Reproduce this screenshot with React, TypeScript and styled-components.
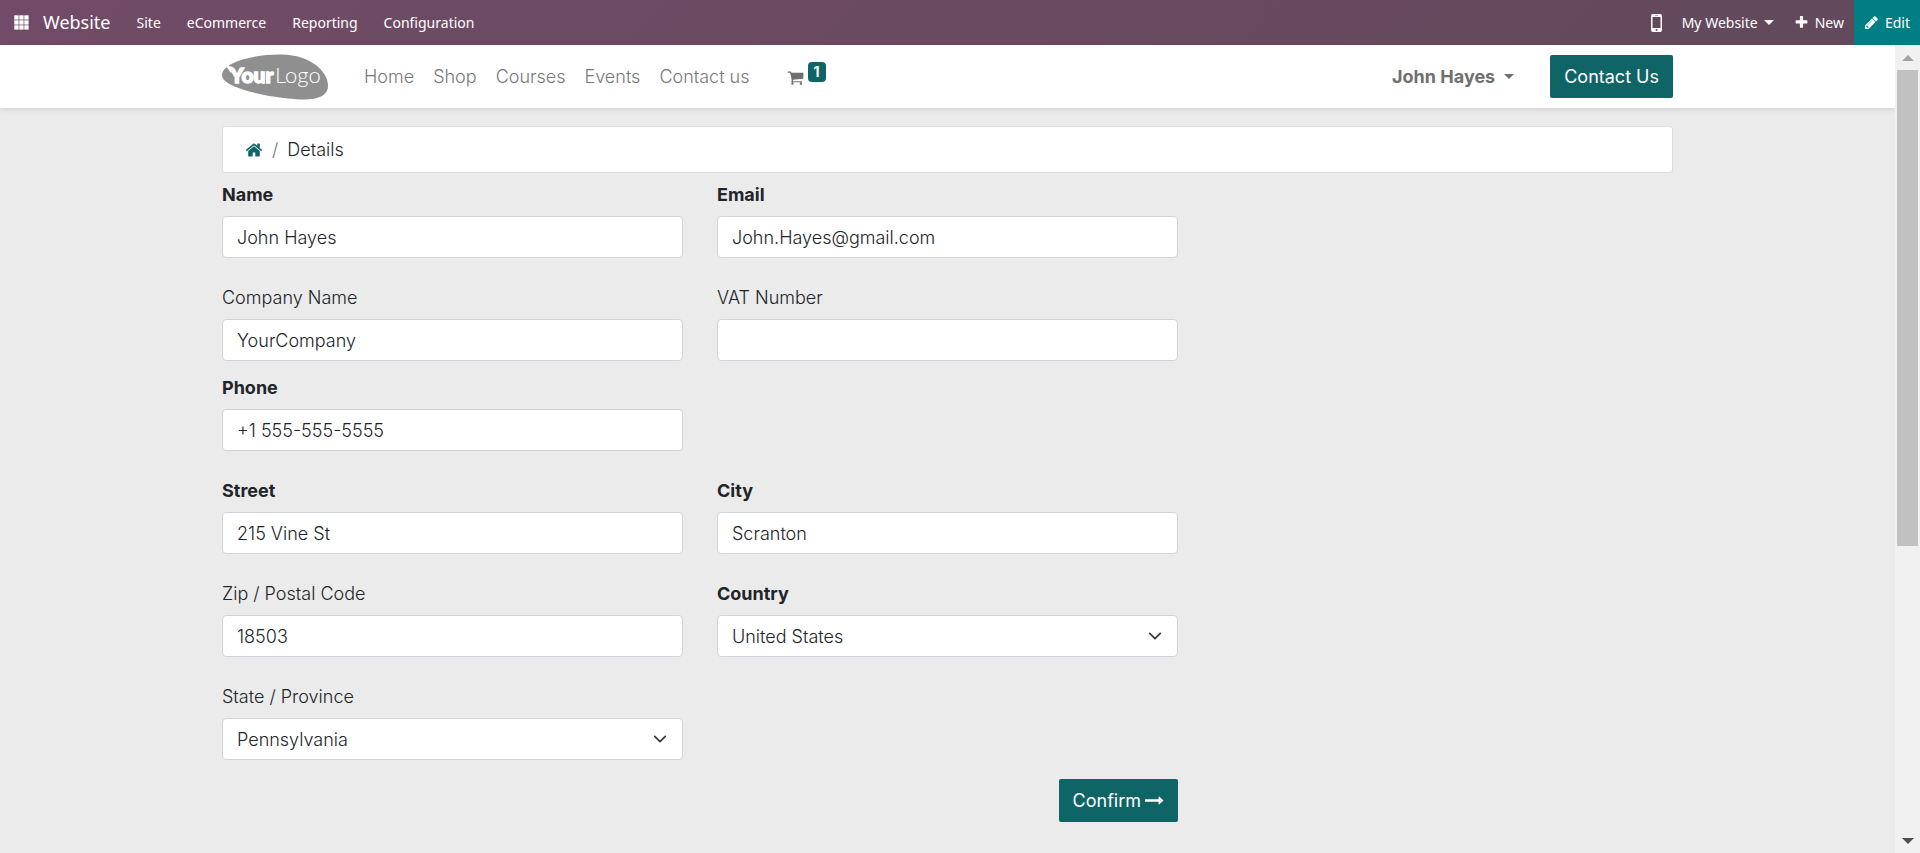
import React from "react";
import styled, { createGlobalStyle } from "styled-components";

const GlobalStyle = createGlobalStyle`
  * { box-sizing: border-box; }
  body {
    margin: 0;
    background: #ebebeb;
    color: #212529;
    font-family: Inter, "Liberation Sans", sans-serif;
    font-size: 18px;
    font-weight: 300;
    line-height: 27px;
  }
  a { color: inherit; text-decoration: none; }
  button, input, select { font: inherit; color: inherit; margin: 0; }
`;

/* ---------- icons ---------- */

const Glyph = styled.svg<{ $size: number }>`
  display: block;
  flex: none;
  width: ${(p) => p.$size}px;
  height: ${(p) => p.$size}px;
  fill: currentColor;
`;

const paths = {
  home: "M1472 992v480q0 26-19 45t-45 19h-384v-384h-256v384h-384q-26 0-45-19t-19-45v-480q0-1 .5-3t.5-3l575-474 575 474q1 2 1 6zm223-69l-62 74q-8 9-21 11h-3q-13 0-21-7l-692-577-692 577q-12 8-24 7-13-2-21-11l-62-74q-8-10-7-23.5t11-21.5l719-599q32-26 76-26t76 26l244 204v-195q0-14 9-23t23-9h192q14 0 23 9t9 23v408l219 182q10 8 11 21.5t-7 23.5z",
  cart: "M704 1536q0 52-38 90t-90 38-90-38-38-90 38-90 90-38 90 38 38 90zm896 0q0 52-38 90t-90 38-90-38-38-90 38-90 90-38 90 38 38 90zm128-1088v512q0 24-16.5 42.5t-40.5 21.5l-1044 122q13 60 13 70 0 16-24 64h920q26 0 45 19t19 45-19 45-45 19h-1024q-26 0-45-19t-19-45q0-11 8-31.5t16-36 21.5-40 15.5-29.5l-177-823h-204q-26 0-45-19t-19-45 19-45 45-19h256q16 0 28.5 6.5t19.5 15.5 13 24.5 8 26 5.5 29.5 4.5 26h1201q26 0 45 19t19 45z",
  pencil: "M491 1536l91-91-235-235-91 91v107h128v128h107zm523-928q0-22-22-22-10 0-17 7l-542 542q-7 7-7 17 0 22 22 22 10 0 17-7l542-542q7-7 7-17zm-54-192l416 416-832 832h-416v-416zm683 96q0 53-37 90l-166 166-416-416 166-165q36-38 90-38 53 0 91 38l235 234q37 39 37 91z",
  plus: "M1600 736v192q0 40-28 68t-68 28h-416v416q0 40-28 68t-68 28h-192q-40 0-68-28t-28-68v-416h-416q-40 0-68-28t-28-68v-192q0-40 28-68t68-28h416v-416q0-40 28-68t68-28h192q40 0 68 28t28 68v416h416q40 0 68 28t28 68z",
  arrow: "M1728 893q0 14-10 24l-384 354q-16 14-35 6-19-9-19-29v-224h-1248q-14 0-23-9t-9-23v-192q0-14 9-23t23-9h1248v-224q0-21 19-29t35 5l384 350q10 10 10 23z",
};

function Icon({ name, size }: { name: keyof typeof paths; size: number }) {
  return (
    <Glyph $size={size} viewBox="0 0 1792 1792" aria-hidden="true">
      <path d={paths[name]} />
    </Glyph>
  );
}

const Caret = styled.span<{ $size: number }>`
  border: ${(p) => p.$size}px solid transparent;
  border-top-color: currentColor;
  border-bottom: 0;
`;

/* ---------- top bar ---------- */

const TopBar = styled.nav`
  display: flex;
  justify-content: space-between;
  height: 45px;
  color: #fff;
  background: linear-gradient(135deg, #714b67, #62495b);
  font: 400 14px/45px "Noto Sans", "Open Sans", sans-serif;
`;

const BarGroup = styled.div`
  display: flex;
  align-items: center;
`;

const AppsButton = styled.button`
  display: flex;
  padding: 0 14px;
  border: 0;
  background: none;
`;

const BrandLink = styled.a`
  margin-right: 13px;
  font-size: 18px;
`;

const BarItem = styled.button<{ $accent?: boolean }>`
  display: flex;
  align-items: center;
  gap: 6px;
  height: 45px;
  padding: 0 ${(p) => (p.$accent ? 10 : 13)}px;
  border: 0;
  background: ${(p) => (p.$accent ? "#017e84" : "none")};
  white-space: nowrap;
`;

const ToolItem = styled(BarItem)`
  padding: 0 10px;
`;

/* ---------- page frame ---------- */

const Viewport = styled.div`
  display: flex;
  min-height: calc(100vh - 45px);
`;

const Page = styled.div`
  flex: 1;
  min-width: 0;
`;

const Container = styled.div`
  width: 100%;
  max-width: 1451px;
  margin: 0 auto;
`;

const ScrollTrack = styled.div`
  display: flex;
  flex: none;
  flex-direction: column;
  align-items: center;
  width: 25px;
  padding: 10px 0 9px;
  background: #f1f1f1;
`;

const ScrollRail = styled.div`
  flex: 1;
  width: 21px;
  margin: 9px 0 12px;
`;

const ScrollThumb = styled.div`
  height: 63%;
  background: #c1c1c1;
`;

const ScrollArrow = styled.span<{ $up?: boolean }>`
  border: 6px solid transparent;
  ${(p) => (p.$up ? "border-bottom-color: #a3a3a3; border-top: 0;" : "border-top-color: #505050; border-bottom: 0;")}
`;

/* ---------- site header ---------- */

const Header = styled.header`
  background: #fff;
  box-shadow: 0 2px 5px rgba(0, 0, 0, 0.1);
`;

const HeaderRow = styled(Container)`
  display: flex;
  align-items: center;
  height: 63px;
`;

const LogoLink = styled.a`
  display: block;
  width: 106px;
  height: 46px;
  margin-right: 27px;
`;

const NavLink = styled.a`
  padding: 0 10px 0 9px;
  color: #787878;
  white-space: nowrap;
`;

const CartLink = styled.a`
  display: flex;
  align-items: flex-start;
  gap: 4px;
  height: 30px;
  margin-left: 27px;
  color: #6f6f6f;
`;

const CartIcon = styled.span`
  padding-top: 7px;
`;

const CartCount = styled.span`
  width: 18px;
  height: 20px;
  border-radius: 4px;
  background: #0f6466;
  color: #fff;
  font-size: 14px;
  font-weight: 700;
  line-height: 19px;
  text-align: center;
`;

const UserMenu = styled.button`
  display: flex;
  align-items: center;
  gap: 9px;
  margin-left: auto;
  margin-right: 36px;
  padding: 0;
  border: 0;
  background: none;
  color: #6f6f6f;
  font-weight: 700;
`;

const PrimaryButton = styled.button`
  display: flex;
  align-items: center;
  gap: 4px;
  height: 43px;
  padding: 0 14px;
  border: 0;
  border-radius: 2px;
  background: #0f6466;
  color: #fff;
  font-weight: 400;
  white-space: nowrap;
`;

/* ---------- content ---------- */

const Breadcrumb = styled.ol`
  display: flex;
  align-items: center;
  gap: 9px;
  height: 47px;
  margin: 18px 0 8px;
  padding: 0 22px;
  border: 1px solid #dcdcdc;
  border-radius: 3px;
  background: #fff;
  list-style: none;
`;

const Separator = styled.li`
  color: #6c757d;
`;

const HomeLink = styled.a`
  color: #0f6466;
`;

const Columns = styled.div`
  display: grid;
  grid-template-columns: repeat(3, 1fr);
  column-gap: 34px;
`;

const Form = styled.form`
  grid-column: span 2;
  display: grid;
  grid-template-columns: 1fr 1fr;
  column-gap: 34px;
  padding-bottom: 31px;
`;

const Field = styled.div<{ $tight?: boolean; $alone?: boolean }>`
  grid-column-start: ${(p) => (p.$alone ? 1 : "auto")};
  grid-column-end: ${(p) => (p.$alone ? "span 2" : "auto")};
  width: ${(p) => (p.$alone ? "calc(50% - 17px)" : "auto")};
  margin-bottom: ${(p) => (p.$tight ? 13 : 26)}px;
`;

const Label = styled.label<{ $required?: boolean }>`
  display: block;
  margin-bottom: 8px;
  font-weight: ${(p) => (p.$required ? 700 : 300)};
`;

const Input = styled.input`
  display: block;
  width: 100%;
  height: 42px;
  padding: 0 14px;
  border: 1px solid #ced4da;
  border-radius: 4px;
  background: #fff;
  outline: 0;
`;

const SelectBox = styled.div`
  display: grid;
  align-items: center;
`;

const Select = styled.select`
  grid-area: 1 / 1;
  width: 100%;
  height: 42px;
  padding: 0 36px 0 14px;
  border: 1px solid #ced4da;
  border-radius: 4px;
  background: #fff;
  appearance: none;
  outline: 0;
`;

const Chevron = styled.svg`
  grid-area: 1 / 1;
  justify-self: end;
  width: 14px;
  height: 14px;
  margin-right: 16px;
  pointer-events: none;
`;

const Actions = styled.div`
  grid-column: span 2;
  display: flex;
  justify-content: flex-end;
  margin-top: -7px;
`;

type FieldSpec = {
  id: string;
  label: string;
  value: string;
  required?: boolean;
  select?: boolean;
  tight?: boolean;
  alone?: boolean;
};

const fields: FieldSpec[] = [
  { id: "name", label: "Name", value: "John Hayes", required: true },
  { id: "email", label: "Email", value: "John.Hayes@gmail.com", required: true },
  { id: "company", label: "Company Name", value: "YourCompany", tight: true },
  { id: "vat", label: "VAT Number", value: "", tight: true },
  { id: "phone", label: "Phone", value: "+1 555-555-5555", required: true, alone: true },
  { id: "street", label: "Street", value: "215 Vine St", required: true },
  { id: "city", label: "City", value: "Scranton", required: true },
  { id: "zip", label: "Zip / Postal Code", value: "18503" },
  { id: "country", label: "Country", value: "United States", required: true, select: true },
  { id: "state", label: "State / Province", value: "Pennsylvania", select: true, alone: true },
];

function FormField({ id, label, value, required, select, tight, alone }: FieldSpec) {
  return (
    <Field $tight={tight} $alone={alone}>
      <Label htmlFor={id} $required={required}>
        {label}
      </Label>
      {select ? (
        <SelectBox>
          <Select id={id} defaultValue={value}>
            <option>{value}</option>
          </Select>
          <Chevron viewBox="0 0 16 16" aria-hidden="true">
            <path d="M2 5l6 6 6-6" fill="none" stroke="#343a40" strokeWidth="2" strokeLinecap="round" strokeLinejoin="round" />
          </Chevron>
        </SelectBox>
      ) : (
        <Input id={id} defaultValue={value} />
      )}
    </Field>
  );
}

function Logo() {
  return (
    <svg width="106" height="46" viewBox="0 0 106 46" role="img" aria-label="Your Logo">
      <path
        d="M0 21C0 9 30 0 60 .5 88 1 106 17 106 32c0 9-9 13.500-24 13.500C60 45.500 0 36 0 21z"
        fill="#8f8f8f"
      />
      <path d="M3 11l8 2-2 6z" fill="#fff" />
      <text x="8" y="29" fill="#fff" stroke="#fff" strokeWidth="1.4" fontFamily="Lato, sans-serif" fontSize="21" fontWeight="900">
        Your
      </text>
      <text x="53" y="29" fill="#fff" fontFamily="Lato, sans-serif" fontSize="22" fontWeight="300">
        Logo
      </text>
    </svg>
  );
}

export default function App() {
  return (
    <>
      <GlobalStyle />
      <TopBar>
        <BarGroup>
          <AppsButton aria-label="Apps">
            <svg width="15" height="15" viewBox="0 0 15 15" fill="#fff" aria-hidden="true">
              {[0, 5, 10].map((y) => [0, 5, 10].map((x) => <rect key={`${x}-${y}`} x={x + 0.3} y={y + 0.3} width="4.3" height="4.3" />))}
            </svg>
          </AppsButton>
          <BrandLink href="#">Website</BrandLink>
          {["Site", "eCommerce", "Reporting", "Configuration"].map((item) => (
            <BarItem key={item}>{item}</BarItem>
          ))}
        </BarGroup>
        <BarGroup>
          <ToolItem aria-label="Mobile preview">
            <svg width="11" height="18" viewBox="0 0 11 18" aria-hidden="true">
              <path
                fill="#fff"
                fillRule="evenodd"
                d="M2 0h7a2 2 0 0 1 2 2v14a2 2 0 0 1-2 2H2a2 2 0 0 1-2-2V2a2 2 0 0 1 2-2zM1.500 3v11h8V3zM5.500 15a1 1 0 1 0 0 2 1 1 0 0 0 0-2zM4 1.200v.6h3v-.6z"
              />
            </svg>
          </ToolItem>
          <ToolItem>
            My Website
            <Caret $size={5} />
          </ToolItem>
          <ToolItem>
            <Icon name="plus" size={15} />
            New
          </ToolItem>
          <BarItem $accent>
            <Icon name="pencil" size={15} />
            Edit
          </BarItem>
        </BarGroup>
      </TopBar>
      <Viewport>
        <Page>
          <Header>
            <HeaderRow>
              <LogoLink href="#">
                <Logo />
              </LogoLink>
              {["Home", "Shop", "Courses", "Events", "Contact us"].map((item) => (
                <NavLink key={item} href="#">
                  {item}
                </NavLink>
              ))}
              <CartLink href="#" aria-label="Shopping cart">
                <CartIcon>
                  <Icon name="cart" size={17} />
                </CartIcon>
                <CartCount>1</CartCount>
              </CartLink>
              <UserMenu>
                John Hayes
                <Caret $size={5} />
              </UserMenu>
              <PrimaryButton>Contact Us</PrimaryButton>
            </HeaderRow>
          </Header>
          <Container as="main">
            <Breadcrumb>
              <li>
                <HomeLink href="#" aria-label="Home">
                  <Icon name="home" size={18} />
                </HomeLink>
              </li>
              <Separator>/</Separator>
              <li>Details</li>
            </Breadcrumb>
            <Columns>
              <Form onSubmit={(e) => e.preventDefault()}>
                {fields.map((field) => (
                  <FormField key={field.id} {...field} />
                ))}
                <Actions>
                  <PrimaryButton type="submit">
                    Confirm
                    <Icon name="arrow" size={19} />
                  </PrimaryButton>
                </Actions>
              </Form>
            </Columns>
          </Container>
        </Page>
        <ScrollTrack aria-hidden="true">
          <ScrollArrow $up />
          <ScrollRail>
            <ScrollThumb />
          </ScrollRail>
          <ScrollArrow />
        </ScrollTrack>
      </Viewport>
    </>
  );
}
